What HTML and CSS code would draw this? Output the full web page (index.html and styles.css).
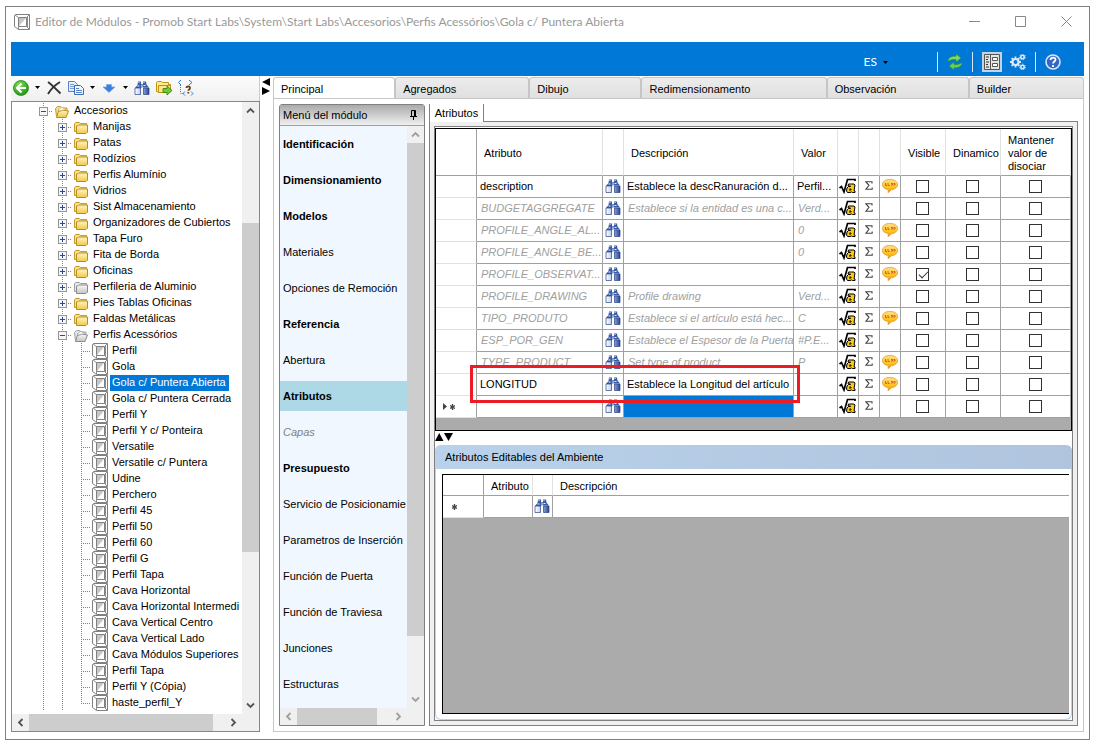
FILE: index.html
```html
<!DOCTYPE html>
<html lang="es">
<head>
  <meta charset="utf-8">
  <title>Editor de Módulos</title>
  <link rel="stylesheet" href="styles.css">
</head>
<body>
  <svg class="defs" aria-hidden="true">
    <defs>
      <linearGradient id="gold" x1="0" y1="0" x2="0" y2="1">
        <stop offset="0" stop-color="#fff6c0"/><stop offset="1" stop-color="#f0c84c"/>
      </linearGradient>
      <linearGradient id="silver" x1="0" y1="0" x2="0" y2="1">
        <stop offset="0" stop-color="#fafafa"/><stop offset="1" stop-color="#c4c4c4"/>
      </linearGradient>
      <linearGradient id="lens" x1="0" y1="0" x2="1" y2="0">
        <stop offset="0" stop-color="#fff"/><stop offset=".45" stop-color="#b4c6e6"/><stop offset="1" stop-color="#27448e"/>
      </linearGradient>
      <radialGradient id="green" cx=".4" cy=".3" r=".8">
        <stop offset="0" stop-color="#7fe05a"/><stop offset="1" stop-color="#148a08"/>
      </radialGradient>
      <linearGradient id="talk" x1="0" y1="0" x2="0" y2="1">
        <stop offset="0" stop-color="#ffe08a"/><stop offset=".6" stop-color="#ffc21c"/><stop offset="1" stop-color="#f0980c"/>
      </linearGradient>
    </defs>
    <symbol id="box" viewBox="0 0 16 16">
      <path d="M1.500.5h14v15h-11l-4-3v-11z" fill="#fff" stroke="#808080"/>
      <path d="M1 1l3.500 2.500M15 1l-2.500 2.500M4.500 15v-2.500M15 15l-2.500-2.500M13.500 3v11" fill="none" stroke="#8c8c8c"/>
      <path d="M4.500 3.500h8v9h-8z" fill="#fff" stroke="#808080"/>
      <path d="M5 4h7l-7 8z" fill="#c6c6c6"/>
    </symbol>
    <symbol id="folder" viewBox="0 0 14 13">
      <path d="M.5 10.500v-8l1-1h4l1 1h6v8z" fill="#f6df85" stroke="#c49a2c"/>
      <path d="M2.500 12.500v-7.500h1l1-1h9v7l-1.500 1.500z" fill="url(#gold)" stroke="#b88c1c"/>
    </symbol>
    <symbol id="folder-gray" viewBox="0 0 14 13">
      <path d="M.5 10.500v-8l1-1h4l1 1h6v8z" fill="#e8e8e8" stroke="#9c9c9c"/>
      <path d="M2.500 12.500v-7.500h1l1-1h9v7l-1.500 1.500z" fill="url(#silver)" stroke="#8c8c8c"/>
    </symbol>
    <symbol id="folder-open" viewBox="0 0 14 13">
      <path d="M1.500 11.500l-1-8 2-2h3l1.500 1.500h5v3" fill="#f6df85" stroke="#c49a2c"/>
      <path d="M3 5l4-3 5 4-5 3z" fill="#fff" stroke="#c8b880"/>
      <path d="M1.500 12.500l2-6.500h3l1-1 6 1-2.500 6.500z" fill="url(#gold)" stroke="#b88c1c"/>
    </symbol>
    <symbol id="folder-open-gray" viewBox="0 0 14 13">
      <path d="M1.500 11.500l-1-8 2-2h3l1.500 1.500h5v3" fill="#e8e8e8" stroke="#9c9c9c"/>
      <path d="M3 5l4-3 5 4-5 3z" fill="#fff" stroke="#aaa"/>
      <path d="M1.500 12.500l2-6.500h3l1-1 6 1-2.500 6.500z" fill="url(#silver)" stroke="#8c8c8c"/>
    </symbol>
    <symbol id="binoculars" viewBox="0 0 16 14">
      <path d="M4 .5h3V3l1 .500L9 3V.5h3l.5 3L15 6.500H9L8 6 7 7H1l2.500-3z" fill="#3a5ca6"/>
      <path d="M4.500 1h1v1h-1zM9.500 1h1v1h-1zM3.500 4.500h2v1h-2zM9.500 4h2v1h-2zM7 4.500h2v1H7z" fill="#e6eeff"/>
      <path d="M1 7h5.500v6.500H1zM9.500 7H15v6.500H9.500z" fill="url(#lens)" stroke="#27448e" stroke-width=".7"/>
    </symbol>
    <symbol id="formula" viewBox="0 0 17 16">
      <path d="M.5 10l2-1.500 2.500 5.500L8.500 1.500H16V3" fill="none" stroke="#000" stroke-width="1.700"/>
      <path d="M9.500 6h5.500l1 1-1 5.500 1 .5v1.500h-2.500l-1-.5-1.500.5H8.500l-1-1.500.5-3 1.500-1.500h2V8H9z" fill="#ffc90e" stroke="#000"/>
      <path d="M10.500 11h1.500v1h-2" fill="none" stroke="#000"/>
    </symbol>
    <symbol id="sigma" viewBox="0 0 8 9">
      <path d="M7 2.500V.7H.8L4 4.300.8 8.300H7.200V6.500" fill="none" stroke="#444" stroke-width="1.100"/>
    </symbol>
    <symbol id="talk-icon" viewBox="0 0 16 14">
      <path d="M8 .4c4.500 0 7.600 2.100 7.600 5S12.500 10.500 9.500 10.700L6 13.700l.3-3.200C2.500 10.100.4 8.200.4 5.400.4 2.500 3.500.4 8 .4z" fill="url(#talk)" stroke="#d89030" stroke-width=".7"/>
      <path d="M3.500 4v2.500h1.500M6 4v2.500h1.500M9 4.500h1.500v1.500H9M11.500 4.500H13v1.500h-1.500" fill="none" stroke="#d0601c"/>
    </symbol>
    <symbol id="chev" viewBox="0 0 9 9">
      <path d="M1 6.500l3.500-3.500L8 6.500" fill="none" stroke="currentColor" stroke-width="1.800"/>
    </symbol>
    <symbol id="caret" viewBox="0 0 5 3"><path d="M0 0h5L2.500 3z"/></symbol>
    <symbol id="new-row" viewBox="0 0 5 6">
      <path d="M2.500 0v6M0 1.500l5 3M5 1.500l-5 3" fill="none" stroke="#444" stroke-width="1.300"/>
    </symbol>
  </svg>

  <div class="window">
    <header class="titlebar">
      <svg class="app-icon"><use href="#box"/></svg>
      <h1>Editor de Módulos - Promob Start Labs\System\Start Labs\Accesorios\Perfis Acessórios\Gola c/ Puntera Abierta</h1>
      <div class="window-buttons">
        <button aria-label="Minimizar"><svg viewBox="0 0 11 11"><path d="M0 5.500h11"/></svg></button>
        <button aria-label="Maximizar"><svg viewBox="0 0 11 11"><path d="M.5.5h10v10H.5z"/></svg></button>
        <button aria-label="Cerrar"><svg viewBox="0 0 11 11"><path d="M.5.5l10 10M10.500.5l-10 10"/></svg></button>
      </div>
    </header>

    <div class="ribbon">
      <button class="language">ES <svg class="caret"><use href="#caret"/></svg></button>
      <span class="sep"></span>
      <button aria-label="Actualizar">
        <svg viewBox="0 0 16 16"><path d="M1 7.500C1 3.500 5 1.800 9 2.300V0l5 4-5 4V5.600C6 5.200 4 5.500 1 7.500z" fill="#7ddc5c" stroke="#2b8a34" stroke-width=".6"/><path d="M15 8.500c0 4-4 5.700-8 5.200V16l-5-4 5-4v2.400c3 .4 5 .1 8-1.900z" fill="#6ccf4c" stroke="#2b8a34" stroke-width=".6"/></svg>
      </button>
      <span class="sep"></span>
      <button class="pressed" aria-label="Propiedades">
        <svg viewBox="0 0 16 16"><path d="M.5.5h15v15H.5z" fill="#e4e4e4" stroke="#555"/><path d="M6.500.5v15M8.500 3.500h5v3h-5zM8.500 9.500h5v3h-5z" fill="#fff" stroke="#555"/><path d="M2 3h3M2 5.500h2M2 8h3M2 10.500h2M2 13h3" stroke="#333"/></svg>
      </button>
      <button aria-label="Configuración">
        <svg viewBox="0 0 16 16" fill="none" stroke="#dde9f5"><circle cx="5.500" cy="8" r="3" stroke-width="2.200"/><path d="M5.500 2.500v2M5.500 11.500v2M0 8h2M9 8h2M1.600 4.100l1.500 1.500M7.900 10.400l1.500 1.500M1.600 11.900l1.500-1.500M7.900 5.600l1.500-1.500" stroke-width="1.800"/><circle cx="12.500" cy="3" r="1.700" stroke-width="1.600"/><circle cx="12.500" cy="3" r="2.900" stroke-dasharray="1.200 1.400"/><circle cx="12.500" cy="13" r="1.700" stroke-width="1.600"/><circle cx="12.500" cy="13" r="2.900" stroke-dasharray="1.200 1.400"/></svg>
      </button>
      <span class="sep"></span>
      <button aria-label="Ayuda">
        <svg viewBox="0 0 16 16"><circle cx="8" cy="8" r="7" fill="#3567c8" stroke="#dbe6f8" stroke-width="1.600"/><path d="M5.500 6c0-3.200 5-3.200 5-.3 0 1.800-2.400 1.800-2.400 3.800M8 11v2" fill="none" stroke="#fff" stroke-width="1.800"/></svg>
      </button>
    </div>

    <main class="workspace">
      <aside class="explorer">
        <div class="toolbar">
          <button aria-label="Volver"><svg viewBox="0 0 16 16"><circle cx="8" cy="8" r="7.500" fill="url(#green)" stroke="#2c8a20" stroke-width=".8"/><path d="M8.500 3.500L4 8l4.500 4.500M4.500 8H13" fill="none" stroke="#fff" stroke-width="2.200"/></svg></button>
          <button class="drop" aria-label="Más"><svg class="caret"><use href="#caret"/></svg></button>
          <button aria-label="Eliminar"><svg viewBox="0 0 16 16"><path d="M2 2c4 3 8 7 12.500 11.500M14 2C9 5 5 9 2 14" fill="none" stroke="#333" stroke-width="1.900"/></svg></button>
          <button aria-label="Copiar"><svg viewBox="0 0 16 16"><path d="M.5 1.500h6l3 3v7h-9z" fill="#e4eeff" stroke="#5a82c4"/><path d="M2 4.500h4M2 6.500h4M2 8.500h4" stroke="#7c9cd4"/><path d="M6.500 5.500h6l3 3v6h-9z" fill="#eef4ff" stroke="#3e68b0"/><path d="M8 8.500h3M8 10.500h6M8 12.500h6" stroke="#5c86cc"/></svg></button>
          <button class="drop" aria-label="Más"><svg class="caret"><use href="#caret"/></svg></button>
          <button aria-label="Mover"><svg viewBox="0 0 16 16"><path d="M5.500 4.500h5V7H14l-6 5.500L2 7h3.500z" fill="#3b7de0" stroke="#7fa8ea" stroke-width=".8"/></svg></button>
          <button class="drop" aria-label="Más"><svg class="caret"><use href="#caret"/></svg></button>
          <button aria-label="Buscar"><svg><use href="#binoculars"/></svg></button>
          <button aria-label="Exportar"><svg viewBox="0 0 16 16"><path d="M.5 11.500v-9l1-1h4l1 1h6v2h2v7l-1 1H3z" fill="#ffe98c" stroke="#c09010"/><path d="M2.500 12V5.500h12" fill="none" stroke="#c09010"/><path d="M7 8.500h4V6l5 4.500-5 4.500v-2.500H7z" fill="#6ccc30" stroke="#2f7d10" stroke-width=".8"/></svg></button>
          <button aria-label="Referencias"><svg viewBox="0 0 16 16" fill="none"><path d="M3 0L.5 2.500 3 5M11 0l3 2.500L11 5M7 11.500l-2 2 2 2M13 11.500l2 2-2 2" stroke="#2f76d8"/><path d="M2.500 5v8M2.500 13.500h3" stroke="#2f76d8" stroke-dasharray="1 1"/><path d="M8.500 8c0-2.300 3.500-2.300 3.500 0 0 1.500-1.700 1.500-1.700 2.800M10.300 12v1.500" stroke="#6b3a1c" stroke-width="1.800"/></svg></button>
        </div>
        <div class="tree-box">
          <ul class="tree" id="tree"></ul>
          <div class="vbar">
            <button aria-label="Subir"><svg><use href="#chev"/></svg></button>
            <div class="track"><div class="thumb tree-thumb"></div></div>
            <button class="down" aria-label="Bajar"><svg><use href="#chev"/></svg></button>
          </div>
          <div class="hbar">
            <button class="left" aria-label="Izquierda"><svg><use href="#chev"/></svg></button>
            <div class="track"><div class="thumb tree-hthumb"></div></div>
            <button class="right" aria-label="Derecha"><svg><use href="#chev"/></svg></button>
          </div>
        </div>
      </aside>

      <div class="splitter">
        <svg viewBox="0 0 8 18"><path d="M8 0v8L0 4zM0 9v8l8-4z"/></svg>
      </div>

      <section class="editor">
        <nav class="tabs">
          <button class="tab active">Principal</button>
          <button class="tab">Agregados</button>
          <button class="tab">Dibujo</button>
          <button class="tab">Redimensionamento</button>
          <button class="tab">Observación</button>
          <button class="tab">Builder</button>
        </nav>

        <div class="page">
          <aside class="menu">
            <div class="menu-header">
              <span>Menú del módulo</span>
              <button aria-label="Fijar"><svg viewBox="0 0 7 10"><path d="M1.500 6V.5h4V6M0 6.500h7M3.500 7v3" fill="none" stroke="#000"/><path d="M4.500 1v5" stroke="#000"/></svg></button>
            </div>
            <div class="menu-body">
              <nav class="menu-list">
                <a href="#" class="strong">Identificación</a>
                <a href="#" class="strong">Dimensionamiento</a>
                <a href="#" class="strong">Modelos</a>
                <a href="#">Materiales</a>
                <a href="#">Opciones de Remoción</a>
                <a href="#" class="strong">Referencia</a>
                <a href="#">Abertura</a>
                <a href="#" class="strong current">Atributos</a>
                <a href="#" class="muted">Capas</a>
                <a href="#" class="strong">Presupuesto</a>
                <a href="#">Servicio de Posicionamie</a>
                <a href="#">Parametros de Inserción</a>
                <a href="#">Función de Puerta</a>
                <a href="#">Función de Traviesa</a>
                <a href="#">Junciones</a>
                <a href="#">Estructuras</a>
              </nav>
              <div class="vbar soft">
                <button aria-label="Subir"><svg><use href="#chev"/></svg></button>
                <div class="track"><div class="thumb menu-thumb"></div></div>
                <button class="down" aria-label="Bajar"><svg><use href="#chev"/></svg></button>
              </div>
              <div class="hbar soft">
                <button class="left" aria-label="Izquierda"><svg><use href="#chev"/></svg></button>
                <div class="track"><div class="thumb menu-hthumb"></div></div>
                <button class="right" aria-label="Derecha"><svg><use href="#chev"/></svg></button>
              </div>
            </div>
          </aside>

          <div class="detail">
            <div class="subtabs"><button class="subtab">Atributos</button></div>
            <div class="detail-body">
              <div class="frame">
                <div class="grid-box">
                  <table class="grid">
                    <colgroup>
                      <col class="c-head"><col class="c-attr"><col class="c-icon"><col><col class="c-value">
                      <col class="c-icon"><col class="c-icon"><col class="c-icon"><col class="c-visible"><col class="c-dynamic"><col class="c-keep">
                    </colgroup>
                    <thead>
                      <tr>
                        <th class="row-head"></th><th>Atributo</th><th></th><th>Descripción</th><th>Valor</th>
                        <th></th><th></th><th></th><th>Visible</th><th>Dinamico</th><th>Mantener valor de disociar</th>
                      </tr>
                    </thead>
                    <tbody id="attributes"></tbody>
                  </table>
                  <div class="highlight"></div>
                </div>

                <div class="hsplit"><svg viewBox="0 0 18 8"><path d="M0 8h8.500L4.200 0zM9 0h9l-4.500 8z"/></svg></div>

                <section class="group">
                  <h2>Atributos Editables del Ambiente</h2>
                  <div class="group-body">
                    <div class="env-box">
                      <table class="grid env">
                        <colgroup><col class="c-head"><col class="c-env"><col class="c-small"><col></colgroup>
                        <thead><tr><th class="row-head"></th><th>Atributo</th><th></th><th>Descripción</th></tr></thead>
                        <tbody>
                          <tr><td class="row-head"><svg class="star"><use href="#new-row"/></svg></td><td></td><td class="icon"><svg class="bino"><use href="#binoculars"/></svg></td><td></td></tr>
                        </tbody>
                      </table>
                    </div>
                  </div>
                </section>
              </div>
            </div>
          </div>
        </div>
      </section>
    </main>
  </div>

  <script>
    // [level, label, icon, expander]
    const nodes = [
      [0, 'Accesorios', 'folder-open', '-'],
      [1, 'Manijas', 'folder', '+'],
      [1, 'Patas', 'folder', '+'],
      [1, 'Rodízios', 'folder', '+'],
      [1, 'Perfis Alumínio', 'folder', '+'],
      [1, 'Vidrios', 'folder', '+'],
      [1, 'Sist Almacenamiento', 'folder', '+'],
      [1, 'Organizadores de Cubiertos', 'folder', '+'],
      [1, 'Tapa Furo', 'folder', '+'],
      [1, 'Fita de Borda', 'folder', '+'],
      [1, 'Oficinas', 'folder', '+'],
      [1, 'Perfileria de Aluminio', 'folder-gray', '+'],
      [1, 'Pies Tablas Oficinas', 'folder', '+'],
      [1, 'Faldas Metálicas', 'folder', '+'],
      [1, 'Perfis Acessórios', 'folder-open-gray', '-']
    ];
    const modules = [
      'Perfil', 'Gola', 'Gola c/ Puntera Abierta', 'Gola c/ Puntera Cerrada', 'Perfil Y',
      'Perfil Y c/ Ponteira', 'Versatile', 'Versatile c/ Puntera', 'Udine', 'Perchero',
      'Perfil 45', 'Perfil 50', 'Perfil 60', 'Perfil G', 'Perfil Tapa', 'Cava Horizontal',
      'Cava Horizontal Intermedi', 'Cava Vertical Centro', 'Cava Vertical Lado',
      'Cava Módulos Superiores', 'Perfil Tapa', 'Perfil Y (Cópia)', 'haste_perfil_Y'
    ];
    modules.forEach(name => nodes.push([2, name, 'box', '']));

    document.getElementById('tree').innerHTML = nodes.map(([level, label, icon, sign], i) => {
      const last = i === nodes.length - 1 ? ' last' : '';
      const selected = label === 'Gola c/ Puntera Abierta' ? ' selected' : '';
      const expander = sign ? `<button class="expander ${sign === '+' ? 'plus' : ''}" aria-label="${label}"></button>` : '';
      return `<li>${'<span class="guide"></span>'.repeat(level)}<span class="guide branch${last}">${expander}</span>` +
        `<svg class="node-icon ${icon === 'box' ? 'module' : ''}"><use href="#${icon}"/></svg>` +
        `<a href="#" class="label${selected}">${label}</a></li>`;
    }).join('');

    // [name, description, value, inherited, comment, visible]
    const attributes = [
      ['description', 'Establece la descRanuración d...', 'Perfil...', false, true, false],
      ['BUDGETAGGREGATE', 'Establece si la entidad es una c...', 'Verd...', true, false, false],
      ['PROFILE_ANGLE_AL...', '', '0', true, true, false],
      ['PROFILE_ANGLE_BE...', '', '0', true, true, false],
      ['PROFILE_OBSERVAT...', '', '', true, true, true],
      ['PROFILE_DRAWING', 'Profile drawing', 'Verd...', true, false, false],
      ['TIPO_PRODUTO', 'Establece si el artículo está hec...', 'C', true, true, false],
      ['ESP_POR_GEN', 'Establece el Espesor de la Puerta', '#P.E...', true, false, false],
      ['TYPE_PRODUCT', 'Set type of product', 'P', true, true, false],
      ['LONGITUD', 'Establece la Longitud del artículo', '', false, true, false],
      ['', '', '', false, false, false]
    ];

    document.getElementById('attributes').innerHTML = attributes.map(([name, desc, value, inherited, comment, visible], i) => {
      const isNew = i === attributes.length - 1;
      const check = (col, on) => `<td class="icon"><input type="checkbox" aria-label="${col} ${name}"${on ? ' checked' : ''}></td>`;
      return `<tr class="${inherited ? 'inherited' : ''}">
        <td class="row-head">${isNew ? '<span class="marker"><svg class="play" viewBox="0 0 4 7"><path d="M0 0l4 3.500L0 7z"/></svg><svg class="star"><use href="#new-row"/></svg></span>' : ''}</td>
        <td>${name}</td>
        <td class="icon"><svg class="bino"><use href="#binoculars"/></svg></td>
        <td class="${isNew ? 'active-cell' : ''}">${desc}</td>
        <td>${value}</td>
        <td class="icon"><svg class="formula"><use href="#formula"/></svg></td>
        <td class="icon"><svg class="sigma"><use href="#sigma"/></svg></td>
        <td class="icon">${comment ? '<svg class="talk"><use href="#talk-icon"/></svg>' : ''}</td>
        ${check('Visible', visible)}${check('Dinamico', false)}${check('Mantener', false)}
      </tr>`;
    }).join('');
  </script>
</body>
</html>
```
FILE: styles.css
```css
* {
  box-sizing: border-box;
}

body {
  display: flex;
  height: 100vh;
  margin: 0;
  padding: 6px 8px 8px 5px;
  background: #fff;
  color: #000;
  font-family: "Liberation Sans", Arial, sans-serif;
  font-size: 11px;
  line-height: 13px;
}

button {
  display: flex;
  align-items: center;
  justify-content: center;
  margin: 0;
  padding: 0;
  border: none;
  background: none;
  color: inherit;
  font: inherit;
}

a {
  color: inherit;
  text-decoration: none;
}

svg {
  display: block;
  flex: none;
}

.defs {
  position: absolute;
  width: 0;
  height: 0;
}

.window {
  flex: 1;
  min-width: 0;
  display: flex;
  flex-direction: column;
  padding: 0 5px 7px;
  border: 1px solid #808080;
}

/* title bar */
.titlebar {
  display: flex;
  align-items: center;
  height: 35px;
  padding: 0 12px 6px 3px;
  color: #999;
}

.app-icon {
  width: 16px;
  height: 16px;
}

.titlebar h1 {
  flex: 1;
  margin: 0 0 0 5px;
  font: 12px/16px Lato, "Open Sans", sans-serif;
  white-space: nowrap;
}

.window-buttons {
  display: flex;
  gap: 35px;
}

.window-buttons svg {
  width: 11px;
  height: 11px;
  fill: none;
  stroke: #888;
}

/* blue bar */
.ribbon {
  display: flex;
  flex: none;
  align-items: center;
  justify-content: flex-end;
  gap: 8px;
  height: 34px;
  padding: 6px 23px 0 0;
  background: #0078d7;
}

.ribbon button svg {
  width: 16px;
  height: 16px;
}

.ribbon .sep {
  width: 1px;
  height: 20px;
  margin: 0 1px;
  background: #d8e8f6;
}

.ribbon .language {
  gap: 6px;
  margin-right: 40px;
  color: #fff;
  font: 12px/16px Lato, "Open Sans", sans-serif;
}

.ribbon .pressed {
  width: 20px;
  height: 20px;
  background: #c2d5e8;
}

.workspace {
  flex: 1;
  display: flex;
  min-height: 0;
}

/* left side */
.explorer {
  display: flex;
  flex-direction: column;
  width: 249px;
}

.toolbar {
  display: flex;
  align-items: center;
  gap: 6px;
  height: 25px;
  padding: 0 0 2px 2px;
  border-right: 1px solid #ccc;
  border-radius: 0 0 0 4px;
  background: linear-gradient(#fcfcfc, #f0f0f0);
}

.toolbar button svg {
  width: 16px;
  height: 16px;
}

.toolbar .drop {
  width: 5px;
}

.ribbon .language .caret,
.toolbar .drop .caret {
  width: 5px;
  height: 3px;
}

.tree-box,
.menu-body {
  flex: 1;
  display: grid;
  grid-template-columns: minmax(0, 1fr) 17px;
  grid-template-rows: minmax(0, 1fr) 17px;
  min-height: 0;
}

.tree-box {
  border: 1px solid #828790;
}

.tree {
  margin: 0;
  padding: 1px 0 0 22px;
  overflow: hidden;
  list-style: none;
}

.tree li {
  display: flex;
  align-items: center;
  height: 16px;
  white-space: nowrap;
}

.guide {
  display: flex;
  flex: none;
  align-items: center;
  width: 19px;
  height: 16px;
  padding-left: 5px;
  background: repeating-linear-gradient(#808080 0 1px, transparent 1px 2px) 9px 0 / 1px 16px no-repeat;
}

.branch {
  background:
    repeating-linear-gradient(#808080 0 1px, transparent 1px 2px) 9px 0 / 1px 16px no-repeat,
    repeating-linear-gradient(90deg, #808080 0 1px, transparent 1px 2px) 9px 8px / 10px 1px no-repeat;
}

.branch.last {
  background-size: 1px 8px, 10px 1px;
}

.expander {
  width: 9px;
  height: 9px;
  border: 1px solid #949494;
  background: linear-gradient(#2c4a9c, #2c4a9c) 1px 3px / 5px 1px no-repeat, #f6f6f6;
}

.expander.plus {
  background:
    linear-gradient(#2c4a9c, #2c4a9c) 1px 3px / 5px 1px no-repeat,
    linear-gradient(#2c4a9c, #2c4a9c) 3px 1px / 1px 5px no-repeat,
    #f6f6f6;
}

.node-icon {
  width: 14px;
  height: 13px;
  margin: 0 3px 0 2px;
}

.node-icon.module {
  width: 16px;
  height: 16px;
  margin: 0 2px 0 1px;
}

.label {
  height: 16px;
  padding: 0 3px 0 2px;
  line-height: 15px;
}

.label.selected {
  background: #0078d7;
  color: #fff;
}

/* scroll bars */
.vbar,
.hbar {
  display: flex;
  background: #f0f0f0;
  color: #555;
}

.vbar {
  flex-direction: column;
}

.hbar {
  grid-column: 1 / 3;
  padding-right: 17px;
}

.soft {
  color: #a0a0a0;
}

.vbar button,
.hbar button {
  flex: none;
  width: 17px;
  height: 17px;
}

.vbar button svg,
.hbar button svg {
  width: 9px;
  height: 9px;
}

.down svg {
  transform: rotate(180deg);
}

.left svg {
  transform: rotate(-90deg);
}

.right svg {
  transform: rotate(90deg);
}

.track {
  flex: 1;
}

.vbar .track {
  display: flex;
  flex-direction: column;
}

.thumb {
  height: 100%;
  background: #cdcdcd;
}

.tree-thumb {
  flex: 0 0 57%;
  height: auto;
  margin-top: 104px;
}

.tree-hthumb {
  width: 94%;
}

.menu-thumb {
  flex: 0 0 90%;
  height: auto;
}

.menu-hthumb {
  width: 86%;
}

.splitter {
  width: 13px;
  padding: 2px 0 0 2px;
}

.splitter svg {
  width: 8px;
  height: 18px;
}

/* right side */
.editor {
  flex: 1;
  display: flex;
  flex-direction: column;
  min-width: 0;
  padding-top: 1px;
}

.tabs {
  display: grid;
  grid-template-columns: 122fr 134fr 112fr 185fr 142fr 115fr;
  height: 21px;
}

.tab {
  justify-content: flex-start;
  padding: 2px 0 0 7px;
  border: 1px solid #c6c6c6;
  border-bottom: none;
  border-radius: 3px 3px 0 0;
  background: linear-gradient(#ececec, #e0e0e0);
}

.tab.active {
  background: #fff;
}

.page {
  flex: 1;
  display: flex;
  gap: 4px;
  min-height: 0;
  padding: 5px;
  border: 1px solid #c6c6c6;
}

.menu {
  display: flex;
  flex-direction: column;
  width: 146px;
  border: 1px solid #808080;
  border-radius: 3px 3px 0 0;
}

.menu-header {
  display: flex;
  align-items: center;
  justify-content: space-between;
  height: 21px;
  padding: 0 7px 0 3px;
  border-bottom: 1px solid #a0a0a0;
  background: linear-gradient(#aaa, #f0f0f0);
}

.menu-header svg {
  width: 7px;
  height: 10px;
}

.menu-list {
  overflow: hidden;
  background: #f0f7ff;
}

.menu-list a {
  display: block;
  height: 30px;
  margin: 3px 0 6px;
  padding-left: 3px;
  line-height: 30px;
  white-space: nowrap;
}

.menu-list .strong {
  font-weight: bold;
}

.menu-list .current {
  background: #add8e6;
}

.menu-list .muted {
  color: #808080;
  font-style: italic;
}

.detail {
  flex: 1;
  display: flex;
  flex-direction: column;
  min-width: 0;
}

.subtabs {
  display: flex;
  height: 18px;
}

.subtabs::after {
  content: "";
  flex: 1;
  border-bottom: 1px solid #808080;
}

.subtab {
  width: 55px;
  border: solid #808080;
  border-width: 0 1px;
}

.detail-body {
  flex: 1;
  display: flex;
  min-height: 0;
  padding: 4px;
  border: 1px solid #808080;
  border-top: none;
  background: #f0f0f0;
}

.frame {
  flex: 1;
  display: flex;
  flex-direction: column;
  min-width: 0;
  padding-top: 1px;
  border: 1px solid #808080;
  background: #fff;
}

.grid-box {
  position: relative;
  padding-bottom: 12px;
  border: 1px solid #000;
  background: #ababab;
}

.highlight {
  position: absolute;
  top: 236px;
  left: 34px;
  width: 330px;
  height: 38px;
  border: 3px solid #ed1c24;
}

.grid {
  width: 100%;
  border-spacing: 0;
  table-layout: fixed;
  background: #fff;
}

.c-head { width: 41px; }
.c-attr { width: 126px; }
.c-icon { width: 21px; }
.c-value { width: 44px; }
.c-visible { width: 45px; }
.c-dynamic { width: 55px; }
.c-keep { width: 70px; }
.c-env { width: 49px; }
.c-small { width: 20px; }

.grid th {
  height: 47px;
  padding: 2px 0 0 7px;
  border-right: 1px solid #e2e2e2;
  border-bottom: 1px solid #a0a0a0;
  font-weight: normal;
  text-align: left;
}

.grid td {
  height: 22px;
  padding: 0 0 0 3px;
  overflow: hidden;
  border-right: 1px solid #a0a0a0;
  border-bottom: 1px solid #a0a0a0;
  white-space: nowrap;
}

.grid .row-head {
  padding-left: 7px;
  border-right-color: #a0a0a0;
}

.grid td.row-head {
  border-bottom-color: #e2e2e2;
}

.grid .icon {
  padding: 0 1px 0 0;
}

.icon svg {
  margin: 0 auto 2px;
}

.marker {
  display: flex;
  align-items: center;
  gap: 3px;
}

.play {
  width: 4px;
  height: 7px;
  fill: #444;
}

.star {
  width: 5px;
  height: 6px;
}

.env .star {
  margin-left: 2px;
}

.bino {
  width: 16px;
  height: 14px;
}

.formula {
  width: 17px;
  height: 16px;
}

.sigma {
  width: 8px;
  height: 9px;
}

.talk {
  width: 16px;
  height: 14px;
}

.inherited td {
  padding-left: 4px;
  color: #a0a0a0;
  font-style: italic;
}

.grid .active-cell {
  background: #0078d7;
}

input[type="checkbox"] {
  appearance: none;
  display: block;
  width: 13px;
  height: 13px;
  margin: 0 auto;
  border: 1px solid #333;
  background: #fff;
}

input[type="checkbox"]:checked::before {
  content: "";
  display: block;
  width: 8px;
  height: 4px;
  margin: 2px 0 0 2px;
  border: solid #333;
  border-width: 0 0 1px 1px;
  transform: rotate(-45deg);
}

.hsplit {
  height: 14px;
  padding-top: 2px;
}

.hsplit svg {
  width: 18px;
  height: 8px;
}

.group {
  flex: 1;
  display: flex;
  flex-direction: column;
  min-height: 0;
  border: 1px solid #b9d1ea;
  border-top: none;
  border-radius: 6px;
}

.group h2 {
  margin: 0 -1px;
  padding-left: 10px;
  border-radius: 6px 6px 0 0;
  background: linear-gradient(90deg, #b9d1ea, #b0c4de);
  font-size: 11px;
  font-weight: normal;
  line-height: 24px;
}

.group-body {
  flex: 1;
  display: flex;
  padding: 5px 2px 5px 6px;
}

.env-box {
  flex: 1;
  border: 1px solid #000;
  border-right: none;
  background: #ababab;
}

.grid.env th {
  height: 21px;
}

.env th:last-child,
.env td:last-child {
  border-right: none;
}
```
